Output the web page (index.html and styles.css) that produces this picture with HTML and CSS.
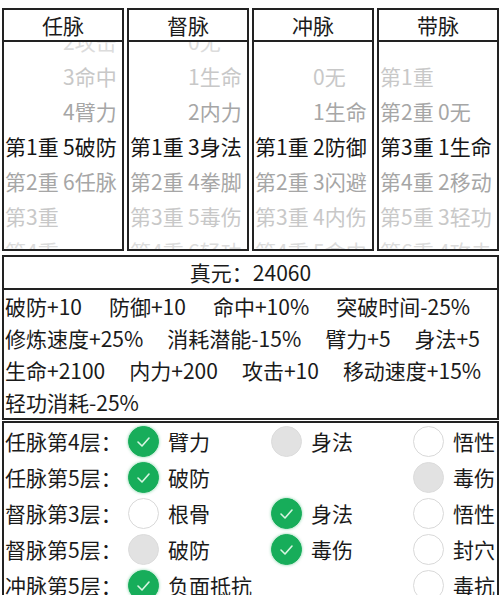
FILE: index.html
```html
<!DOCTYPE html>
<html lang="zh">
<head>
<meta charset="utf-8">
<title>经脉</title>
<link rel="stylesheet" href="styles.css">
</head>
<body>
<div class="page">
  <div class="cols">
    <div class="col">
      <div class="col-head">任脉</div>
      <div class="wheel">
        <div class="wheel-list">
          <div class="row d3"><span class="l"></span><span class="r">2攻击</span></div>
          <div class="row d2"><span class="l"></span><span class="r">3命中</span></div>
          <div class="row d1"><span class="l"></span><span class="r">4臂力</span></div>
          <div class="row d0"><span class="l">第1重</span><span class="r">5破防</span></div>
          <div class="row d1"><span class="l">第2重</span><span class="r">6任脉</span></div>
          <div class="row d2"><span class="l">第3重</span><span class="r"></span></div>
          <div class="row d3"><span class="l">第4重</span><span class="r"></span></div>
        </div>
      </div>
    </div>
    <div class="col">
      <div class="col-head">督脉</div>
      <div class="wheel">
        <div class="wheel-list">
          <div class="row d3"><span class="l"></span><span class="r">0无</span></div>
          <div class="row d2"><span class="l"></span><span class="r">1生命</span></div>
          <div class="row d1"><span class="l"></span><span class="r">2内力</span></div>
          <div class="row d0"><span class="l">第1重</span><span class="r">3身法</span></div>
          <div class="row d1"><span class="l">第2重</span><span class="r">4拳脚</span></div>
          <div class="row d2"><span class="l">第3重</span><span class="r">5毒伤</span></div>
          <div class="row d3"><span class="l">第4重</span><span class="r">6轻功</span></div>
        </div>
      </div>
    </div>
    <div class="col">
      <div class="col-head">冲脉</div>
      <div class="wheel">
        <div class="wheel-list">
          <div class="row d3"><span class="l"></span><span class="r"></span></div>
          <div class="row d2"><span class="l"></span><span class="r">0无</span></div>
          <div class="row d1"><span class="l"></span><span class="r">1生命</span></div>
          <div class="row d0"><span class="l">第1重</span><span class="r">2防御</span></div>
          <div class="row d1"><span class="l">第2重</span><span class="r">3闪避</span></div>
          <div class="row d2"><span class="l">第3重</span><span class="r">4内伤</span></div>
          <div class="row d3"><span class="l">第4重</span><span class="r">5命中</span></div>
        </div>
      </div>
    </div>
    <div class="col">
      <div class="col-head">带脉</div>
      <div class="wheel">
        <div class="wheel-list">
          <div class="row d3"><span class="l"></span><span class="r"></span></div>
          <div class="row d2"><span class="l">第1重</span><span class="r"></span></div>
          <div class="row d1"><span class="l">第2重</span><span class="r">0无</span></div>
          <div class="row d0"><span class="l">第3重</span><span class="r">1生命</span></div>
          <div class="row d1"><span class="l">第4重</span><span class="r">2移动</span></div>
          <div class="row d2"><span class="l">第5重</span><span class="r">3轻功</span></div>
          <div class="row d3"><span class="l">第6重</span><span class="r">4攻击</span></div>
        </div>
      </div>
    </div>
  </div>

  <div class="box stats">
    <div class="stats-head">真元：24060</div>
    <div class="stats-body">
      <div class="line wide"><span>破防+10</span><span>防御+10</span><span>命中+10%</span><span>突破时间-25%</span></div>
      <div class="line"><span>修炼速度+25%</span><span>消耗潜能-15%</span><span>臂力+5</span><span>身法+5</span></div>
      <div class="line"><span>生命+2100</span><span>内力+200</span><span>攻击+10</span><span>移动速度+15%</span></div>
      <div class="line"><span>轻功消耗-25%</span></div>
    </div>
  </div>

  <div class="box checks">
    <div class="cbrow">
      <span class="cb-label">任脉第4层：</span>
      <span class="item"><span class="cb on"><svg viewBox="0 0 31 31"><polyline points="10,16 14,20 21,12"/></svg></span><span class="txt">臂力</span></span>
      <span class="item"><span class="cb dis"></span><span class="txt">身法</span></span>
      <span class="item"><span class="cb"></span><span class="txt">悟性</span></span>
    </div>
    <div class="cbrow">
      <span class="cb-label">任脉第5层：</span>
      <span class="item"><span class="cb on"><svg viewBox="0 0 31 31"><polyline points="10,16 14,20 21,12"/></svg></span><span class="txt">破防</span></span>
      <span class="item"></span>
      <span class="item"><span class="cb dis"></span><span class="txt">毒伤</span></span>
    </div>
    <div class="cbrow">
      <span class="cb-label">督脉第3层：</span>
      <span class="item"><span class="cb"></span><span class="txt">根骨</span></span>
      <span class="item"><span class="cb on"><svg viewBox="0 0 31 31"><polyline points="10,16 14,20 21,12"/></svg></span><span class="txt">身法</span></span>
      <span class="item"><span class="cb"></span><span class="txt">悟性</span></span>
    </div>
    <div class="cbrow">
      <span class="cb-label">督脉第5层：</span>
      <span class="item"><span class="cb dis"></span><span class="txt">破防</span></span>
      <span class="item"><span class="cb on"><svg viewBox="0 0 31 31"><polyline points="10,16 14,20 21,12"/></svg></span><span class="txt">毒伤</span></span>
      <span class="item"><span class="cb"></span><span class="txt">封穴</span></span>
    </div>
    <div class="cbrow">
      <span class="cb-label">冲脉第5层：</span>
      <span class="item"><span class="cb on"><svg viewBox="0 0 31 31"><polyline points="10,16 14,20 21,12"/></svg></span><span class="txt">负面抵抗</span></span>
      <span class="item"></span>
      <span class="item"><span class="cb"></span><span class="txt">毒抗</span></span>
    </div>
  </div>
</div>
</body>
</html>
```

FILE: styles.css
```css
* {
  box-sizing: border-box;
  margin: 0;
  padding: 0;
}

html, body {
  background: #fff;
}

body {
  width: 500px;
  height: 595px;
  overflow: hidden;
  font-family: "Noto Sans CJK SC", "Noto Sans", sans-serif;
  font-size: 21px;
  color: #1a1a1a;
}

.page {
  padding: 8px 1px 0 2px;
}

.cols {
  display: grid;
  grid-template-columns: repeat(4, 1fr);
  gap: 3px;
}

.col {
  border: 2px solid #222;
  height: 243px;
  display: flex;
  flex-direction: column;
}

.col-head {
  flex: none;
  height: 32px;
  border-bottom: 2px solid #222;
  text-align: center;
  line-height: 30px;
}

.wheel {
  flex: 1;
  overflow: hidden;
}

.wheel-list {
  margin-top: -18.5px;
}

.row {
  display: flex;
  height: 35px;
  line-height: 35px;
  white-space: nowrap;
}

.l {
  flex: none;
  width: 59px;
  padding-left: 1px;
}

.r {
  flex: none;
}

.d0 { color: #151515; }
.d1 { color: #a6a6a6; }
.d2 { color: #c8c8c8; }
.d3 { color: #dcdcdc; }

.box {
  border: 2px solid #222;
}

.stats {
  margin-top: 4px;
}

.stats-head {
  height: 33px;
  line-height: 31px;
  text-align: center;
  border-bottom: 2px solid #222;
}

.stats-body {
  padding-left: 1px;
}

.line {
  display: flex;
  gap: 24px;
  height: 32px;
  line-height: 32px;
  white-space: nowrap;
}

.line.wide {
  gap: 27px;
}

.checks {
  margin-top: 1px;
  padding-left: 1px;
  height: 200px;
}

.cbrow {
  display: grid;
  grid-template-columns: 123px 143px 142px 1fr;
  height: 36px;
  align-items: center;
  white-space: nowrap;
}

.item {
  display: flex;
  align-items: center;
}

.cb {
  flex: none;
  width: 31px;
  height: 31px;
  border-radius: 50%;
  border: 1.5px solid #d9d9d9;
  background: #fff;
  display: flex;
  align-items: center;
  justify-content: center;
}

.cb.dis {
  background: #e2e2e2;
  border-color: #dcdcdc;
}

.cb.on {
  background: #17ad5a;
  border-color: #17ad5a;
  box-shadow: 0 0 3px rgba(23, 173, 90, 0.55);
}

.cb svg {
  width: 31px;
  height: 31px;
  flex: none;
}

.cb svg polyline {
  fill: none;
  stroke: #d8f5e2;
  stroke-width: 1.6;
  stroke-linecap: round;
  stroke-linejoin: round;
}

.txt {
  margin-left: 9px;
}
```
